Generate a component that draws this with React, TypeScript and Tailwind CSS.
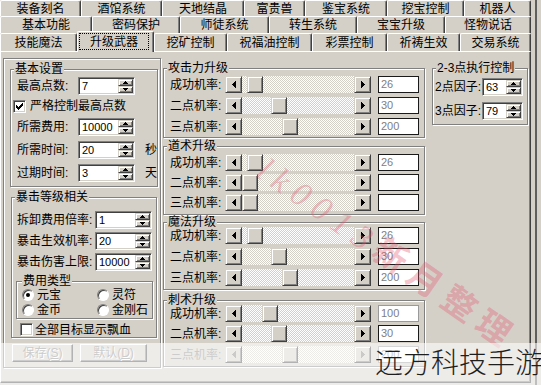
import React from "react";

const font = "font-['Liberation_Sans','Noto_Sans_CJK_SC',sans-serif]";
const raised =
  "border border-t-white border-l-white border-r-[#404040] border-b-[#404040] shadow-[inset_-1px_-1px_0_#808080]";
const sunken =
  "border border-t-[#808080] border-l-[#808080] border-r-white border-b-white shadow-[inset_1px_1px_0_#404040,inset_-1px_-1px_0_#d4d0c8]";
const etched = "border border-[#808080] shadow-[inset_1px_1px_0_#fff,1px_1px_0_#fff]";
const scrollBtn =
  "border border-t-[#d4d0c8] border-l-[#d4d0c8] border-r-[#404040] border-b-[#404040] shadow-[inset_1px_1px_0_#fff,inset_-1px_-1px_0_#808080] bg-[#d4d0c8]";
const checker =
  "[background-image:repeating-conic-gradient(#fff_0_25%,#d4d0c8_0_50%)] [background-size:2px_2px]";

type TabDef = { label: string; w: string; sel?: boolean };

const tabRows: { h: string; tabs: TabDef[] }[] = [
  {
    h: "h-[16px]",
    tabs: [
      { label: "装备刻名", w: "w-[81px]" },
      { label: "酒馆系统", w: "w-[81px]" },
      { label: "天地结晶", w: "w-[82px]" },
      { label: "富贵兽", w: "w-[61px]" },
      { label: "鉴宝系统", w: "w-[82px]" },
      { label: "挖宝控制", w: "w-[77px]" },
      { label: "机器人", w: "w-[67px]" },
    ],
  },
  {
    h: "h-[17px]",
    tabs: [
      { label: "基本功能", w: "w-[92px]" },
      { label: "密码保护", w: "w-[88px]" },
      { label: "师徒系统", w: "w-[89px]" },
      { label: "转生系统", w: "w-[88px]" },
      { label: "宝宝升级", w: "w-[88px]" },
      { label: "怪物说话", w: "w-[86px]" },
    ],
  },
  {
    h: "h-[18px]",
    tabs: [
      { label: "技能魔法", w: "w-[77px]" },
      { label: "升级武器", w: "w-[77px]", sel: true },
      { label: "挖矿控制", w: "w-[73px]" },
      { label: "祝福油控制", w: "w-[85px]" },
      { label: "彩票控制", w: "w-[75px]" },
      { label: "祈祷生效", w: "w-[73px]" },
      { label: "交易系统", w: "w-[71px]" },
    ],
  },
];

function Tab({ t }: { t: TabDef }) {
  if (t.sel) {
    return (
      <div
        className={`${t.w} relative z-10 -mt-[2px] h-[21px] bg-[#d4d0c8] border-t border-l border-white border-r border-r-[#404040] shadow-[inset_-1px_0_0_#808080] rounded-t-[2px]`}
      >
        <div className="ml-[1px] mt-[1px] w-[70px] h-[17px] flex items-center justify-center border border-dotted border-black">
          {t.label}
        </div>
      </div>
    );
  }
  return (
    <div
      className={`${t.w} h-full flex items-center justify-center border-t border-l border-white border-r border-r-[#404040] shadow-[inset_-1px_0_0_#808080] rounded-t-[2px]`}
    >
      {t.label}
    </div>
  );
}

function Arrow({ dir }: { dir: "l" | "r" | "u" | "d" }) {
  if (dir === "l")
    return (
      <svg width="4" height="7" shapeRendering="crispEdges">
        <path d="M0 3h1v1H0zM1 2h1v3H1zM2 1h1v5H2zM3 0h1v7H3z" fill="#000" />
      </svg>
    );
  if (dir === "r")
    return (
      <svg width="4" height="7" shapeRendering="crispEdges">
        <path d="M3 3h1v1H3zM2 2h1v3H2zM1 1h1v5H1zM0 0h1v7H0z" fill="#000" />
      </svg>
    );
  if (dir === "u")
    return (
      <svg width="5" height="3" shapeRendering="crispEdges">
        <path d="M2 0h1v1H2zM1 1h3v1H1zM0 2h5v1H0z" fill="#000" />
      </svg>
    );
  return (
    <svg width="5" height="3" shapeRendering="crispEdges">
      <path d="M0 0h5v1H0zM1 1h3v1H1zM2 2h1v1H2z" fill="#000" />
    </svg>
  );
}

function SpinEdit({ value, w }: { value: string; w: string }) {
  return (
    <div className={`${w} h-[18px] flex bg-white p-[1px] ${sunken}`}>
      <span className="flex-1 pl-[2px] text-[11px] leading-[14px]">{value}</span>
      <div className="w-[15px] flex flex-col">
        <div className={`flex-1 flex items-center justify-center ${scrollBtn}`}>
          <Arrow dir="u" />
        </div>
        <div className={`flex-1 flex items-center justify-center ${scrollBtn}`}>
          <Arrow dir="d" />
        </div>
      </div>
    </div>
  );
}

function CheckBox({ on }: { on?: boolean }) {
  return (
    <div className={`w-[13px] h-[13px] shrink-0 bg-white flex items-center justify-center ${sunken}`}>
      {on && (
        <svg width="7" height="7" shapeRendering="crispEdges">
          <path
            d="M0 2h1v3H0zM1 3h1v3H1zM2 4h1v3H2zM3 3h1v3H3zM4 2h1v3H4zM5 1h1v3H5zM6 0h1v3H6z"
            fill="#000"
          />
        </svg>
      )}
    </div>
  );
}

function Radio({ label, on }: { label: string; on?: boolean }) {
  return (
    <div className="flex items-center h-[14px]">
      <div className="w-[12px] h-[12px] rounded-full bg-white flex items-center justify-center border border-t-[#808080] border-l-[#808080] border-r-white border-b-white shadow-[inset_1px_1px_0_#404040]">
        {on && <div className="w-[4px] h-[4px] rounded-full bg-black" />}
      </div>
      <span className="ml-[3px]">{label}</span>
    </div>
  );
}

function Group({
  title,
  className,
  lg = "ml-[3px]",
  children,
}: {
  title: string;
  className: string;
  lg?: string;
  children: React.ReactNode;
}) {
  return (
    <fieldset className={`${etched} ${className}`}>
      <legend className={`${lg} px-[1px] leading-[12px] bg-[#d4d0c8]`}>{title}</legend>
      {children}
    </fieldset>
  );
}

type Bar = { label: string; thumb: number; value: string; box?: string; mt: string; off?: boolean };

function ScrollRow({ b }: { b: Bar }) {
  const arrowCls = b.off ? "opacity-40" : "";
  return (
    <div className={`flex items-center h-[17px] ${b.mt}`}>
      <span className={`w-[55px] whitespace-nowrap ${b.off ? "text-[#808080]" : ""}`}>{b.label}</span>
      <div className="flex w-[146px] h-[17px]">
        <div className={`w-[17px] h-full flex items-center justify-center ${scrollBtn}`}>
          <span className={arrowCls}>
            <Arrow dir="l" />
          </span>
        </div>
        <div className={`flex-1 flex ${checker}`}>
          <div style={{ marginLeft: b.thumb }} className={`w-[16px] h-full ${scrollBtn}`} />
        </div>
        <div className={`w-[17px] h-full flex items-center justify-center ${scrollBtn}`}>
          <span className={arrowCls}>
            <Arrow dir="r" />
          </span>
        </div>
      </div>
      <div
        className={`ml-[7px] w-[41px] h-[17px] bg-white border pl-[2px] text-[11px] leading-[15px] text-[#808080] ${
          b.box ?? "border-[#1a1a1a]"
        }`}
      >
        {b.value}
      </div>
    </div>
  );
}

const upgradeGroups: { title: string; cls: string; pb: string; bars: Bar[] }[] = [
  {
    title: "攻击力升级",
    cls: "mt-[10px]",
    pb: "pb-[2px]",
    bars: [
      { label: "成功机率:", thumb: 5, value: "26", mt: "mt-[2px]" },
      { label: "二点机率:", thumb: 29, value: "30", mt: "mt-[4px]" },
      { label: "三点机率:", thumb: 40, value: "200", mt: "mt-[4px]" },
    ],
  },
  {
    title: "道术升级",
    cls: "mt-[2px]",
    pb: "pb-[3px]",
    bars: [
      { label: "成功机率:", thumb: 5, value: "26", mt: "mt-[2px]" },
      { label: "二点机率:", thumb: 0, value: "", mt: "mt-[3px]" },
      { label: "三点机率:", thumb: 0, value: "", mt: "mt-[3px]" },
    ],
  },
  {
    title: "魔法升级",
    cls: "mt-[1px]",
    pb: "pb-[3px]",
    bars: [
      { label: "成功机率:", thumb: 5, value: "26", mt: "-mt-[1px]" },
      { label: "二点机率:", thumb: 29, value: "30", mt: "mt-[4px]" },
      { label: "三点机率:", thumb: 40, value: "200", mt: "mt-[4px]" },
    ],
  },
  {
    title: "刺术升级",
    cls: "mt-[4px]",
    pb: "pb-[3px]",
    bars: [
      { label: "成功机率:", thumb: 20, value: "100", box: "border-[#9a9a9a]", mt: "-mt-[1px]" },
      { label: "二点机率:", thumb: 29, value: "30", mt: "mt-[3px]" },
      { label: "三点机率:", thumb: 40, value: "200", box: "border-[#9a9a9a]", mt: "mt-[4px]", off: true },
    ],
  },
];

function PushButton({ label, hot, w }: { label: string; hot: string; w: string }) {
  return (
    <div
      className={`${w} h-[18px] flex items-center justify-center text-[#808080] [text-shadow:1px_1px_0_#fff] ${raised}`}
    >
      {label}(<span className="underline">{hot}</span>)
    </div>
  );
}

export default function App() {
  return (
    <div
      className={`relative w-[541px] h-[385px] overflow-hidden bg-[#d4d0c8] text-black text-[12px] leading-[12px] ${font} flex`}
    >
      <div className="w-[531px] flex flex-col">
        {/* tab strip, three rows */}
        {tabRows.map((row, i) => (
          <div key={i} className={`flex ${row.h}`}>
            {row.tabs.map((t) => (
              <Tab key={t.label} t={t} />
            ))}
          </div>
        ))}

        {/* page body */}
        <div className="h-[332px] flex items-start border-t border-l border-white border-r border-b border-r-[#404040] border-b-[#404040] shadow-[inset_-1px_-1px_0_#808080]">
          {/* left column */}
          <div className={`ml-[2px] mt-[6px] w-[158px] h-[310px] ${etched}`}>
            <Group title="基本设置" className="ml-[6px] mt-[4px] w-[147px]">
              <div className="pl-[6px] pb-[4px]">
                <div className="flex items-center h-[18px] mt-[2px]">
                  <span className="w-[61px]">最高点数:</span>
                  <SpinEdit value="7" w="w-[57px]" />
                </div>
                <div className="flex items-center h-[18px] mt-[2px] -ml-[4px]">
                  <CheckBox on />
                  <span className="ml-[4px]">严格控制最高点数</span>
                </div>
                <div className="flex items-center h-[18px] mt-[3px]">
                  <span className="w-[61px]">所需费用:</span>
                  <SpinEdit value="10000" w="w-[57px]" />
                </div>
                <div className="flex items-center h-[18px] mt-[5px]">
                  <span className="w-[61px]">所需时间:</span>
                  <SpinEdit value="20" w="w-[57px]" />
                  <span className="ml-[10px]">秒</span>
                </div>
                <div className="flex items-center h-[18px] mt-[5px]">
                  <span className="w-[61px]">过期时间:</span>
                  <SpinEdit value="3" w="w-[57px]" />
                  <span className="ml-[10px]">天</span>
                </div>
              </div>
            </Group>

            <Group title="暴击等级相关" className="ml-[7px] mt-[4px] w-[146px]">
              <div className="pl-[5px] pb-[1px]">
                <div className="flex items-center h-[18px] mt-[8px]">
                  <span className="w-[78px] whitespace-nowrap">拆卸费用倍率:</span>
                  <SpinEdit value="1" w="w-[57px]" />
                </div>
                <div className="flex items-center h-[18px] mt-[3px]">
                  <span className="w-[78px] whitespace-nowrap">暴击生效机率:</span>
                  <SpinEdit value="20" w="w-[57px]" />
                </div>
                <div className="flex items-center h-[18px] mt-[3px]">
                  <span className="w-[78px] whitespace-nowrap">暴击伤害上限:</span>
                  <SpinEdit value="10000" w="w-[57px]" />
                </div>
                <Group title="费用类型" lg="ml-[5px]" className="-ml-[1px] mt-[4px] w-[137px]">
                  <div className="pl-[5px] pb-[1px] mt-[1px] grid grid-cols-[75px_1fr] gap-y-[1px]">
                    <Radio label="元宝" on />
                    <Radio label="灵符" />
                    <Radio label="金币" />
                    <Radio label="金刚石" />
                  </div>
                </Group>
                <div className="flex items-center h-[13px] mt-[4px] ml-[3px]">
                  <CheckBox />
                  <span className="ml-[2px]">全部目标显示飘血</span>
                </div>
              </div>
            </Group>

            <div className="flex ml-[8px] mt-[6px] gap-[7px]">
              <PushButton label="保存" hot="S" w="w-[61px]" />
              <PushButton label="默认" hot="D" w="w-[67px]" />
            </div>
          </div>

          {/* middle column */}
          <div className="ml-[2px] w-[262px] flex flex-col">
            {upgradeGroups.map((g) => (
              <Group key={g.title} title={g.title} className={`${g.cls} w-[262px]`}>
                <div className={`pl-[6px] ${g.pb}`}>
                  {g.bars.map((b, i) => (
                    <ScrollRow key={i} b={b} />
                  ))}
                </div>
              </Group>
            ))}
          </div>

          {/* right column */}
          <Group title="2-3点执行控制" className="ml-[7px] mt-[10px] w-[96px]">
            <div className="pl-[2px] pb-[5px]">
              <div className="flex items-center h-[17px] mt-[4px]">
                <span className="w-[47px] whitespace-nowrap">2点因子:</span>
                <SpinEdit value="63" w="w-[41px]" />
              </div>
              <div className="flex items-center h-[17px] mt-[7px]">
                <span className="w-[47px] whitespace-nowrap">3点因子:</span>
                <SpinEdit value="79" w="w-[41px]" />
              </div>
            </div>
          </Group>
        </div>
      </div>
      <div className="ml-[4px] w-[2px] h-full bg-[#5e5e5e]" />

      {/* red diagonal watermark */}
      <div className="absolute left-[228px] top-[235px] w-[320px] text-center rotate-[35deg] whitespace-nowrap text-[34px] leading-[34px] tracking-[8px] text-[#e4566e]/35 pointer-events-none">
        <span className="italic font-['Liberation_Serif',serif]">lk0013</span>
        <span className="font-bold font-['Noto_Sans_CJK_SC',sans-serif]">新月整理</span>
      </div>

      {/* bottom wash band */}
      <div className="absolute left-0 top-[343px] w-full h-[42px] bg-white/60 pointer-events-none">
        <div className="pl-[375px] pt-[4px] whitespace-nowrap text-[28px] leading-[28px] font-light text-[#1e1e1e] font-['Noto_Sans_CJK_SC',sans-serif]">
          远方科技手游
        </div>
      </div>
    </div>
  );
}
